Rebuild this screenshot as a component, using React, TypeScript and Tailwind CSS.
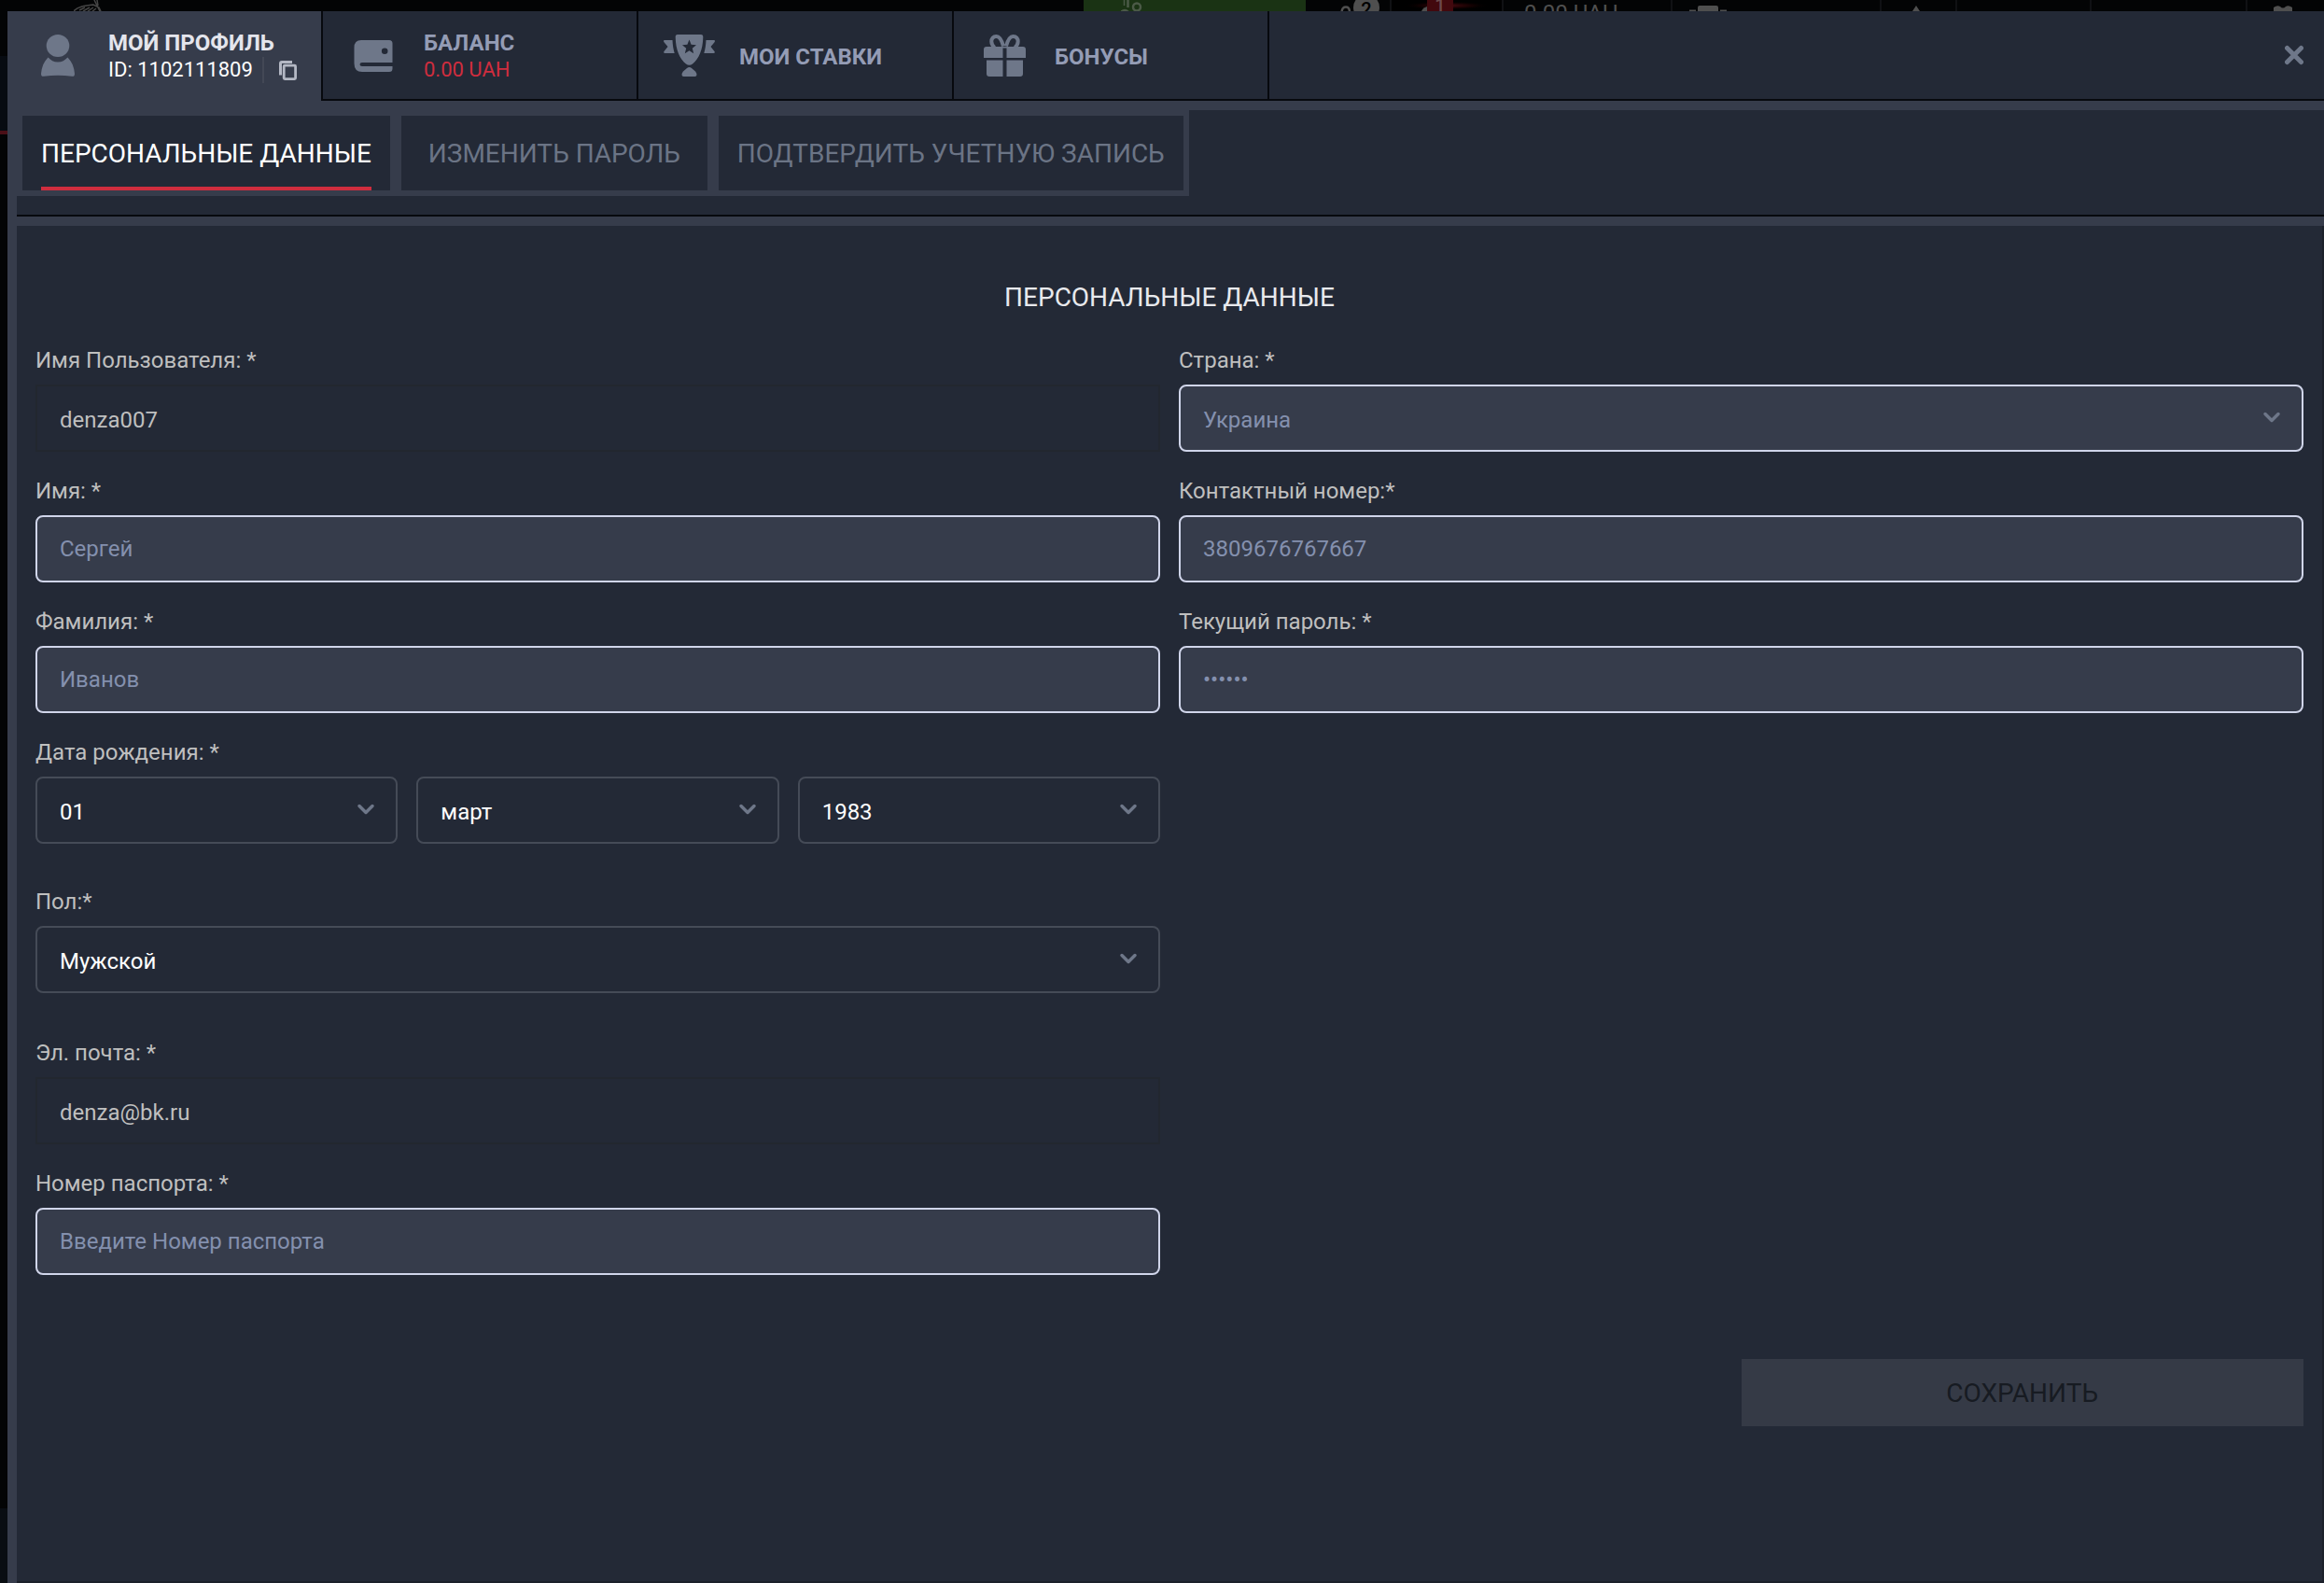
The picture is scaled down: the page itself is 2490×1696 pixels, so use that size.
import { ReactNode, useState } from "react"

const UserIcon = () => (
    <svg width="36" height="45" viewBox="0 0 36 45" fill="#6e7789" aria-hidden="true">
        <ellipse cx="18" cy="12" rx="12.3" ry="12" />
        <path d="M7.5 24.5C10.500 27.500 13.500 29.500 18 29.500C22.500 29.500 25.500 27.500 28.500 24.500C33 29 35.500 35 36 42C36 44.300 35 45 33 44.800C23 43.400 13 43.400 3 44.800C1 45 0 44.300 0 42C0.500 35 3 29 7.500 24.500Z" />
    </svg>
)

const WalletIcon = () => (
    <svg width="42" height="36" viewBox="0 -2 42 36" fill="#6e7789" aria-hidden="true">
        <path
            fillRule="evenodd"
            d="M8 0H38Q41.500 0 41.500 3.500V24H9Q6.500 24 6.500 26T9 28H41.500V30.500Q41.500 34 38 34H9Q0.500 34 0.500 25V8Q0.500 0 8 0ZM33.200 8.500A3.300 3.300 0 1 0 33.201 15.100A3.300 3.300 0 1 0 33.200 8.500Z"
        />
    </svg>
)

const TrophyIcon = () => (
    <svg width="55" height="45" viewBox="0 0 55 45" fill="#6e7789" aria-hidden="true">
        <path
            fillRule="evenodd"
            d="M15 0H40Q42.500 0 42.300 3C42 16 38 26 31 31.500Q27.500 34 24 31.500C17 26 13 16 12.700 3Q12.500 0 15 0ZM27.500 5.500L25.400 10.800L20 11.200L24.200 14.800L22.800 20.300L27.500 17.300L32.200 20.300L30.800 14.800L35 11.200L29.600 10.800Z"
        />
        <path d="M1 6H9.500C9.700 11 10.500 16 11.700 20H1.500Q-0.500 20 0.500 18L4.500 13L0.300 8Q-0.500 6 1 6Z" />
        <path d="M54 6H45.500C45.300 11 44.500 16 43.300 20H53.500Q55.500 20 54.500 18L50.500 13L54.700 8Q55.500 6 54 6Z" />
        <path d="M25 36Q27.500 34.200 30 36L34 39.500Q35.500 41 35.500 43Q35.500 45 33.500 45H21.500Q19.500 45 19.500 43Q19.500 41 21 39.500Z" />
    </svg>
)

const GiftIcon = () => (
    <svg width="45" height="45" viewBox="0 0 45 45" fill="#6e7789" aria-hidden="true">
        <path
            d="M21 12.500C19 5 16.500 2 13.500 2C10 2 8.300 4.500 8.300 7.500C8.300 10 9.500 12 11.500 14M24 12.500C26 5 28.500 2 31.500 2C35 2 36.700 4.500 36.700 7.500C36.700 10 35.500 12 33.500 14"
            fill="none"
            stroke="#6e7789"
            strokeWidth="4"
        />
        <path d="M3 13H20.500V25H0V16Q0 13 3 13ZM24.500 13H42Q45 13 45 16V25H24.500ZM20 13H25V14.500H20Z" />
        <path d="M3 27.500H20.500V45H6Q3 45 3 42ZM24.500 27.500H42V42Q42 45 39 45H24.500Z" />
    </svg>
)

const CopyIcon = () => (
    <svg width="19" height="21" viewBox="0 0 19 21" fill="none" stroke="#b4b8c4" aria-hidden="true">
        <path d="M14 1.500H3Q1.500 1.500 1.500 3V15.500" strokeWidth="3" />
        <rect x="5.200" y="5.200" width="12.400" height="14.400" rx="1" strokeWidth="2.800" />
    </svg>
)

const Chevron = () => (
    <svg
        className="pointer-events-none absolute right-6 top-7"
        width="20"
        height="14"
        viewBox="0 0 20 14"
        fill="none"
        stroke="#6e7789"
        strokeWidth="3.500"
        strokeLinecap="round"
        strokeLinejoin="round"
        aria-hidden="true"
    >
        <path d="M3 3.500L10 10.500L17 3.500" />
    </svg>
)

// dimmed site header, only its lower edge shows above the dialog
const SiteHeader = () => (
    <div className="flex h-3 overflow-hidden text-[#4f4f4f]">
        <div className="flex-1 pl-[79px]">
            <svg width="32" height="12" viewBox="0 0 32 12" fill="none" stroke="#454545" strokeWidth="1.500" aria-hidden="true">
                <path d="M0 12C4 7 12 6 21 5L27 8L29 12M6 11L12 8M10 12L17 8M15 12L21 8M20 12L24 9M22 0L28 12M25 0L26 6" />
            </svg>
        </div>
        <div className="w-[238px] bg-[#1a3314] pl-[40px]">
            <svg width="24" height="12" viewBox="0 0 24 12" fill="none" stroke="#4b5a47" strokeWidth="2.500" aria-hidden="true">
                <circle cx="17" cy="7.500" r="4" />
                <path d="M7.500 0V8" />
                <path d="M3.500 0V6" strokeWidth="1.500" />
                <path d="M0 13Q4 9 8 13" />
            </svg>
        </div>
        <div className="flex w-[92px] border-r-2 border-[#101114] pl-[37px]">
            <svg width="14" height="12" viewBox="0 0 14 12" fill="none" stroke="#4f4f4f" strokeWidth="2.500" aria-hidden="true">
                <path d="M1.500 13Q2 7.500 6 7.500T10 13" />
            </svg>
            <span className="-mt-1.5 flex size-7 shrink-0 items-center justify-center rounded-full bg-[#4f4f4f] pt-1 text-xl font-medium leading-6 text-black">2</span>
        </div>
        <div className="flex w-[120px] border-r-2 border-[#101114] bg-radial from-[#4a0d14] to-black to-60% pl-[32px]">
            <svg width="6" height="12" viewBox="0 0 6 12" fill="#4f4f4f" aria-hidden="true">
                <path d="M0 12Q2 8 6 7V12Z" />
            </svg>
            <span className="-mt-1.5 flex h-6 w-7 shrink-0 items-center justify-center bg-[#42090e] text-xl font-medium leading-6 text-[#6b4a4c]">1</span>
        </div>
        <div className="w-[181px] border-r-2 border-[#101114] pl-[22px] text-2xl leading-7">0.00 UAH</div>
        <div className="w-[224px] border-r-2 border-[#101114] pl-[18px]">
            <svg width="40" height="12" viewBox="0 0 40 12" fill="#4f4f4f" aria-hidden="true">
                <path d="M9 12V8Q9 6 11 6H29Q31 6 31 8V12ZM0 12V10.500H7V12ZM33 12V10.500H40V12Z" />
            </svg>
        </div>
        <div className="w-[81px] border-r-2 border-[#101114] pl-[33px]">
            <svg width="8" height="12" viewBox="0 0 8 12" fill="#4f4f4f" aria-hidden="true">
                <path d="M0 12L4 6L8 12Z" />
            </svg>
        </div>
        <div className="w-[144px] border-r-2 border-[#101114]" />
        <div className="w-[167px] border-r-2 border-[#101114]" />
        <div className="w-[82px] pl-[28px]">
            <svg width="20" height="12" viewBox="0 0 20 12" fill="#4f4f4f" aria-hidden="true">
                <path d="M0 12V8Q4 5 7 7Q10 10 13 7Q16 5 20 8V12Z" />
            </svg>
        </div>
    </div>
)

type TabProps = { icon: ReactNode; title: string; active?: boolean; children?: ReactNode }

const Tab = ({ icon, title, active, children }: TabProps) => (
    <div
        className={
            active
                ? "flex w-[338px] items-center border-r-2 border-[#07090e] pb-0.5 text-[#e4e5ec]"
                : "flex w-[338px] items-center border-r-2 border-b-2 border-[#07090e] bg-[#232936] text-[#949cb5]"
        }
    >
        <div className="flex w-[108px] shrink-0 justify-center">{icon}</div>
        <div className="pt-1">
            <button type="button" className="block text-left text-2xl font-bold leading-7">{title}</button>
            {children}
        </div>
    </div>
)

const subTabs = ["ПЕРСОНАЛЬНЫЕ ДАННЫЕ", "ИЗМЕНИТЬ ПАРОЛЬ", "ПОДТВЕРДИТЬ УЧЕТНУЮ ЗАПИСЬ"]

type FieldProps = { id: string; label: string; children: ReactNode; className?: string }

const Field = ({ id, label, children, className }: FieldProps) => (
    <div className={className}>
        <label htmlFor={id} className="mb-3 block text-2xl leading-7 text-[#bfbfbf]">{label}</label>
        {children}
    </div>
)

const lightBox = "block h-[72px] w-full rounded-lg border-2 border-[#d0d5ea] bg-[#363c4b] px-6 text-2xl text-[#8490ae] placeholder:text-[#8490ae]"
const darkBox = "block h-[72px] w-full rounded-lg border-2 border-[#454b57] bg-transparent px-6 text-2xl text-white"
const readOnlyBox = "block h-[72px] w-full border-2 border-[#22272f] bg-transparent px-6 pt-1 text-2xl text-[#bfbfbf]"

const Select = ({ id, value, light, label }: { id: string; value: string; light?: boolean; label?: string }) => (
    <div className="relative">
        <select id={id} aria-label={label} className={`appearance-none pt-1 ${light ? lightBox : darkBox}`}>
            <option>{value}</option>
        </select>
        <Chevron />
    </div>
)

const App = () => {
    const [activeTab, setActiveTab] = useState(0)

    return (
        <div className="flex min-h-screen flex-col bg-[#030405] font-['Roboto',sans-serif]">
            <SiteHeader />
            <div className="flex flex-1">
                <div className="flex w-2 flex-col">
                    <div className="h-12" />
                    <div className="h-20 bg-[#070b11]" />
                    <div className="h-1 bg-[#4a0f17]" />
                    <div className="flex-1" />
                    <div className="h-20 bg-[#090d12]" />
                </div>
                <main className="flex flex-1 flex-col bg-[#363c4b]">
                    <header className="flex h-24">
                        <Tab icon={<UserIcon />} title="МОЙ ПРОФИЛЬ" active>
                            <div className="flex h-[30px] items-center text-white">
                                <span className="text-[22px] leading-[30px]">ID: 1102111809</span>
                                <span className="ml-2.5 h-7 w-0.5 bg-[#434855]" />
                                <button type="button" aria-label="Скопировать ID" className="ml-4">
                                    <CopyIcon />
                                </button>
                            </div>
                        </Tab>
                        <Tab icon={<WalletIcon />} title="БАЛАНС">
                            <p className="text-[22px] leading-[30px] text-[#cf2d3e]">0.00 UAH</p>
                        </Tab>
                        <Tab icon={<TrophyIcon />} title="МОИ СТАВКИ" />
                        <Tab icon={<GiftIcon />} title="БОНУСЫ" />
                        <div className="flex flex-1 items-center justify-end border-b-2 border-[#07090e] bg-[#232936] pr-[22px]">
                            <button type="button" aria-label="Закрыть">
                                <svg width="20" height="22" viewBox="0 0 20 22" stroke="#6e7789" strokeWidth="5" strokeLinecap="round" aria-hidden="true">
                                    <path d="M2.500 3.500L17.500 18.500M17.500 3.500L2.500 18.500" />
                                </svg>
                            </button>
                        </div>
                    </header>

                    <div className="ml-2.5 mt-2.5 flex h-[114px] items-start border-b-2 border-[#07090e] bg-[#232936]">
                        <nav className="flex gap-3 bg-[#363c4b] p-1.5">
                            {subTabs.map((tab, i) => (
                                <button
                                    key={tab}
                                    type="button"
                                    onClick={() => setActiveTab(i)}
                                    className="flex h-20 min-w-[328px] justify-center bg-[#232936] px-5 text-[28px]"
                                >
                                    <span
                                        className={
                                            i === activeTab
                                                ? "flex h-20 items-center border-b-4 border-[#cf2d3e] pt-1.5 text-white"
                                                : "flex h-20 items-center pt-0.5 text-[#6b7485]"
                                        }
                                    >
                                        {tab}
                                    </span>
                                </button>
                            ))}
                        </nav>
                    </div>

                    <form className="ml-2.5 mt-2.5 flex-1 border-r-2 border-b-2 border-[#1b202a] bg-[#232936] px-5 pt-[61px]">
                        <h1 className="mb-[37px] text-center text-[28px] leading-8 text-[#e8e9ed]">ПЕРСОНАЛЬНЫЕ ДАННЫЕ</h1>
                        <div className="grid grid-cols-2 gap-x-5">
                            <div className="flex flex-col gap-7">
                                <Field id="username" label="Имя Пользователя: *">
                                    <input id="username" className={readOnlyBox} value="denza007" readOnly />
                                </Field>
                                <Field id="firstName" label="Имя: *">
                                    <input id="firstName" className={lightBox} placeholder="Сергей" />
                                </Field>
                                <Field id="lastName" label="Фамилия: *">
                                    <input id="lastName" className={lightBox} placeholder="Иванов" />
                                </Field>
                                <Field id="birthDay" label="Дата рождения: *">
                                    <div className="grid grid-cols-3 gap-5">
                                        <Select id="birthDay" value="01" />
                                        <Select id="birthMonth" value="март" label="Месяц" />
                                        <Select id="birthYear" value="1983" label="Год" />
                                    </div>
                                </Field>
                                <Field id="gender" label="Пол:*" className="mt-5">
                                    <Select id="gender" value="Мужской" />
                                </Field>
                                <Field id="email" label="Эл. почта: *" className="mt-[22px]">
                                    <input id="email" type="email" className={readOnlyBox} value="denza@bk.ru" readOnly />
                                </Field>
                                <Field id="passport" label="Номер паспорта: *">
                                    <input id="passport" className={lightBox} placeholder="Введите Номер паспорта" />
                                </Field>
                            </div>
                            <div className="flex flex-col gap-7">
                                <Field id="country" label="Страна: *">
                                    <Select id="country" value="Украина" light />
                                </Field>
                                <Field id="phone" label="Контактный номер:*">
                                    <input id="phone" type="tel" className={lightBox} placeholder="3809676767667" />
                                </Field>
                                <Field id="password" label="Текущий пароль: *">
                                    <input id="password" type="password" className={lightBox} placeholder="••••••" />
                                </Field>
                            </div>
                        </div>
                        <div className="mt-[90px] grid grid-cols-2 gap-x-5">
                            <button type="submit" className="col-start-2 h-[72px] w-1/2 justify-self-end bg-[#353a46] pt-0.5 text-[28px] text-[#171b22]">СОХРАНИТЬ</button>
                        </div>
                    </form>
                </main>
            </div>
        </div>
    )
}

export default App
